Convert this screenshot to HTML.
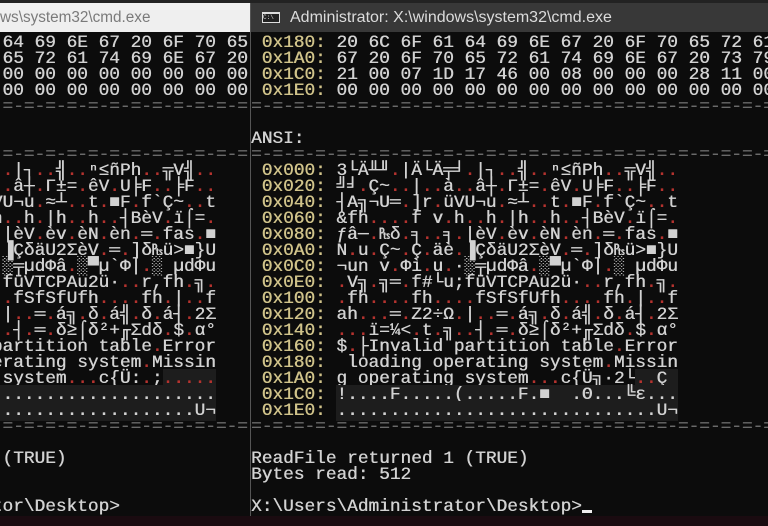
<!DOCTYPE html>
<html><head><meta charset="utf-8"><style>
*{margin:0;padding:0}
body{width:768px;height:526px;background:#1a0b10;position:relative;overflow:hidden}
.top{position:absolute;left:0;top:0;width:768px;height:3px;background:#222}
.win{position:absolute;top:3px;height:513px;background:#0c0c0c;overflow:hidden}
.tb{position:absolute;left:0;top:0;right:0;height:29px;font:15.3px "Liberation Sans",sans-serif;line-height:29px;white-space:nowrap}
pre{position:absolute;top:31.5px;font:17.8px/16px "Liberation Mono","DejaVu Sans Mono",monospace;color:#d2d2d2;white-space:pre;text-shadow:0.4px 0 0 currentColor}
i{font-style:normal;color:#b5332f}
b{font-weight:normal;color:#d0c38a}
s{text-decoration:none;color:#6a6a6a}
u{text-decoration:none;background:#1d1d1d}
.cur{display:inline-block;width:10px;height:3px;background:#eee;vertical-align:-2px}
</style></head><body>
<div class="top"></div>
<div class="win" style="left:0;width:250px">
<div class="tb" style="background:#efefef;color:#7a7a7a">ws\system32\cmd.exe</div>
<pre style="left:-211px"><b> 0x180:</b> 20 6C 6F 61 64 69 6E 67 20 6F 70 65 72 61
<b> 0x1A0:</b> 67 20 6F 70 65 72 61 74 69 6E 67 20 73 79
<b> 0x1C0:</b> 00 00 00 00 00 00 00 00 00 00 00 00 00 00
<b> 0x1E0:</b> 00 00 00 00 00 00 00 00 00 00 00 00 00 00
<s>=-=-=-=-=-=-=-=-=-=-=-=-=-=-=-=-=-=-=-=-=-=-=-=-=-=-</s>

ANSI:
<s>=-=-=-=-=-=-=-=-=-=-=-=-=-=-=-=-=-=-=-=-=-=-=-=-=-=-</s>
<b> 0x000:</b> 3└Ä╨╜<i>.</i>|Ä└Ä╤╛<i>.</i>|┐<i>..</i>╣<i>..</i>ⁿ≤ñPh<i>..</i>╦V╣<i>..</i>
<b> 0x020:</b> ╝╛<i>.</i>Ç~<i>..</i>|<i>..</i>à<i>..</i>â┼<i>.</i>Γ±=<i>.</i>êV<i>.</i>U╞F<i>..</i>╞F<i>..</i>
<b> 0x040:</b> ┤A╗¬U═<i>.</i>]r<i>.</i>üVU¬u<i>.</i>≈┴<i>..</i>t<i>.</i>■F<i>.</i>f`Ç~<i>..</i>t
<b> 0x060:</b> &amp;fh<i>....</i>f v<i>.</i>h<i>..</i>h<i>.</i>|h<i>..</i>h<i>..</i>┤BèV<i>.</i>ï⌠=<i>.</i>
<b> 0x080:</b> ƒâ─<i>.</i>₧δ<i>.</i>╕<i>..</i>╕<i>.</i>|èV<i>.</i>èv<i>.</i>èN<i>.</i>èn<i>.</i>═<i>.</i>fas<i>.</i>■
<b> 0x0A0:</b> N<i>.</i>u<i>.</i>Ç~<i>.</i>Ç<i>.</i>äè<i>.</i>▐ÇδäU2ΣèV<i>.</i>═<i>.</i>]δ₧ü&gt;■}U
<b> 0x0C0:</b> ¬un v<i>.</i>Φì<i>.</i>u<i>.</i>·░╤µdΦâ<i>.</i>░▀µ`Φ|<i>.</i>░ µdΦu
<b> 0x0E0:</b> <i>.</i>V╗<i>.</i>╗═<i>.</i>f#└u;füVTCPAu2ü·<i>..</i>r,fh<i>.</i>╗<i>.</i>
<b> 0x100:</b> <i>.</i>fh<i>....</i>fh<i>....</i>fSfSfUfh<i>....</i>fh<i>.</i>|<i>..</i>f
<b> 0x120:</b> ah<i>...</i>═<i>.</i>Z2÷Ω<i>.</i>|<i>..</i>═<i>.</i>á╗<i>.</i>δ<i>.</i>á╣<i>.</i>δ<i>.</i>á┤<i>.</i>2Σ
<b> 0x140:</b> <i>...</i>ï=¼&lt;<i>.</i>t<i>.</i>╗<i>..</i>┤<i>.</i>═<i>.</i>δ≥⌠δ²+╓Σdδ<i>.</i>$<i>.</i>α°
<b> 0x160:</b> $<i>.</i>├Invalid partition table<i>.</i>Error
<b> 0x180:</b>  loading operating system<i>.</i>Missin
<b> 0x1A0:</b> g operating system<i>...</i>c{Ü:<i>.</i>;<u><i>.....</i></u>
<b> 0x1C0:</b> <u>................................</u>
<b> 0x1E0:</b> <u>..............................U¬</u>
<s>=-=-=-=-=-=-=-=-=-=-=-=-=-=-=-=-=-=-=-=-=-=-=-=-=-=-</s>

ReadFile returned 1 (TRUE)
Bytes read: 512

X:\Users\Administrator\Desktop&gt;</pre>
</div>
<div class="win" style="left:250px;width:518px;border-left:1px solid #555">
<div class="tb" style="background:#383838;color:#dcdcdc;font-size:16px"><span style="display:inline-block;width:18px;height:11px;background:#ddd;margin:0 10px 0 11px;vertical-align:-1px;position:relative"><span style="position:absolute;left:1px;top:2px;right:1px;bottom:1px;background:#222;color:#ddd;font:6px/8px 'Liberation Mono',monospace">C:\</span></span>Administrator: X:\windows\system32\cmd.exe</div>
<pre style="left:0"><b> 0x180:</b> 20 6C 6F 61 64 69 6E 67 20 6F 70 65 72 61 74 69
<b> 0x1A0:</b> 67 20 6F 70 65 72 61 74 69 6E 67 20 73 79 73 74
<b> 0x1C0:</b> 21 00 07 1D 17 46 00 08 00 00 00 28 11 00 00 00
<b> 0x1E0:</b> 00 00 00 00 00 00 00 00 00 00 00 00 00 00 00 00
<s>=-=-=-=-=-=-=-=-=-=-=-=-=-=-=-=-=-=-=-=-=-=-=-=-=-=-</s>

ANSI:
<s>=-=-=-=-=-=-=-=-=-=-=-=-=-=-=-=-=-=-=-=-=-=-=-=-=-=-</s>
<b> 0x000:</b> 3└Ä╨╜<i>.</i>|Ä└Ä╤╛<i>.</i>|┐<i>..</i>╣<i>..</i>ⁿ≤ñPh<i>..</i>╦V╣<i>..</i>
<b> 0x020:</b> ╝╛<i>.</i>Ç~<i>..</i>|<i>..</i>à<i>..</i>â┼<i>.</i>Γ±=<i>.</i>êV<i>.</i>U╞F<i>..</i>╞F<i>..</i>
<b> 0x040:</b> ┤A╗¬U═<i>.</i>]r<i>.</i>üVU¬u<i>.</i>≈┴<i>..</i>t<i>.</i>■F<i>.</i>f`Ç~<i>..</i>t
<b> 0x060:</b> &amp;fh<i>....</i>f v<i>.</i>h<i>..</i>h<i>.</i>|h<i>..</i>h<i>..</i>┤BèV<i>.</i>ï⌠=<i>.</i>
<b> 0x080:</b> ƒâ─<i>.</i>₧δ<i>.</i>╕<i>..</i>╕<i>.</i>|èV<i>.</i>èv<i>.</i>èN<i>.</i>èn<i>.</i>═<i>.</i>fas<i>.</i>■
<b> 0x0A0:</b> N<i>.</i>u<i>.</i>Ç~<i>.</i>Ç<i>.</i>äè<i>.</i>▐ÇδäU2ΣèV<i>.</i>═<i>.</i>]δ₧ü&gt;■}U
<b> 0x0C0:</b> ¬un v<i>.</i>Φì<i>.</i>u<i>.</i>·░╤µdΦâ<i>.</i>░▀µ`Φ|<i>.</i>░ µdΦu
<b> 0x0E0:</b> <i>.</i>V╗<i>.</i>╗═<i>.</i>f#└u;füVTCPAu2ü·<i>..</i>r,fh<i>.</i>╗<i>.</i>
<b> 0x100:</b> <i>.</i>fh<i>....</i>fh<i>....</i>fSfSfUfh<i>....</i>fh<i>.</i>|<i>..</i>f
<b> 0x120:</b> ah<i>...</i>═<i>.</i>Z2÷Ω<i>.</i>|<i>..</i>═<i>.</i>á╗<i>.</i>δ<i>.</i>á╣<i>.</i>δ<i>.</i>á┤<i>.</i>2Σ
<b> 0x140:</b> <i>...</i>ï=¼&lt;<i>.</i>t<i>.</i>╗<i>..</i>┤<i>.</i>═<i>.</i>δ≥⌠δ²+╓Σdδ<i>.</i>$<i>.</i>α°
<b> 0x160:</b> $<i>.</i>├Invalid partition table<i>.</i>Error
<b> 0x180:</b>  loading operating system<i>.</i>Missin
<b> 0x1A0:</b> g operating system<i>...</i>c{Ü╗·2└<u><i>..</i>Ç </u>
<b> 0x1C0:</b> <u>!....F.....(.....F.■  .Θ...╚ε...</u>
<b> 0x1E0:</b> <u>..............................U¬</u>
<s>=-=-=-=-=-=-=-=-=-=-=-=-=-=-=-=-=-=-=-=-=-=-=-=-=-=-</s>

ReadFile returned 1 (TRUE)
Bytes read: 512

X:\Users\Administrator\Desktop&gt;<span class="cur"></span></pre>
</div>
</body></html>
